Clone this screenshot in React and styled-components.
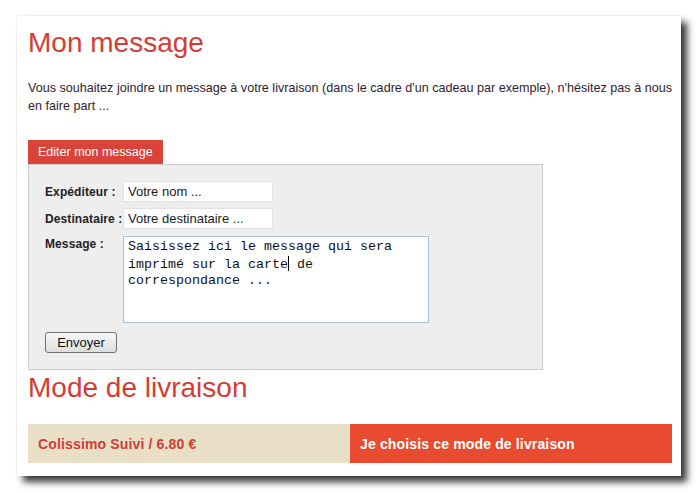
import React from "react";
import styled, { createGlobalStyle } from "styled-components";

const Global = createGlobalStyle`
  html, body { margin: 0; padding: 0; background: #ffffff; }
  body { font-family: "Liberation Sans", Arial, sans-serif; }
  * { box-sizing: border-box; }
`;

const Page = styled.div`
  padding: 16px 0 0 17px;
  width: 698px;
  height: 493px;
`;

const Card = styled.div`
  width: 664px;
  height: 460px;
  background: #ffffff;
  padding: 11px 9px 0 11px;
  box-shadow: 6px 6px 7px rgba(0, 0, 0, 0.78), 0 0 0 1px rgba(0, 0, 0, 0.035);
  display: flex;
  flex-direction: column;
`;

const Title = styled.h1`
  margin: ${(p) => p.$mt || 0}px 0 0 0;
  font-size: 28px;
  line-height: 32px;
  font-weight: normal;
  color: #d33d35;
`;

const Intro = styled.p`
  margin: 20px 0 0 0;
  font-size: 12.6px;
  line-height: 18px;
  color: #33222e;
`;

const Tab = styled.div`
  margin-top: 25px;
  align-self: flex-start;
  width: 135px;
  height: 24px;
  background: #d9433a;
  color: #ffffff;
  font-size: 12.5px;
  line-height: 24px;
  padding-left: 10px;
`;

const FormBox = styled.div`
  width: 515px;
  background: #eeeeee;
  border: 1px solid #cccccc;
  padding: 16px;
  display: flex;
  flex-direction: column;
  align-items: flex-start;
`;

const Grid = styled.div`
  display: grid;
  grid-template-columns: 78px auto;
  row-gap: 6px;
  align-items: center;
`;

const Label = styled.label`
  font-size: 12px;
  font-weight: bold;
  letter-spacing: 0.1px;
  color: #222;
  align-self: ${(p) => (p.$top ? "start" : "center")};
  padding-top: ${(p) => (p.$top ? "2px" : "0")};
`;

const TextInput = styled.div`
  width: 150px;
  height: 21px;
  background: #ffffff;
  border: 1px solid #e2e2e2;
  font-size: 13px;
  line-height: 19px;
  padding-left: 4px;
  color: #221a22;
`;

const MessageBox = styled.div`
  margin-top: 1px;
  width: 306px;
  height: 87px;
  background: #ffffff;
  border: 1px solid #a9bfd2;
  padding: 2px 4px;
  font-family: "Liberation Mono", "Courier New", monospace;
  font-size: 13.33px;
  line-height: 16.5px;
  color: #111;
`;

const MessageLine = styled.div`
  white-space: pre;
`;

const Caret = styled.span`
  display: inline-block;
  width: 1px;
  height: 15px;
  background: #000;
  vertical-align: -3px;
`;

const Button = styled.button`
  margin-top: 9px;
  width: 72px;
  height: 21px;
  border: 1px solid #707070;
  border-radius: 3px;
  background: linear-gradient(#f7f7f7, #dedede);
  font-family: "Liberation Sans", Arial, sans-serif;
  font-size: 13px;
  color: #111;
  padding: 0;
`;

const Delivery = styled.div`
  margin-top: 20px;
  display: grid;
  grid-template-columns: 1fr 1fr;
  height: 39px;
`;

const Cell = styled.div`
  background: ${(p) => (p.$action ? "#e84b2f" : "#e8dfc6")};
  color: ${(p) => (p.$action ? "#ffffff" : "#cc3f36")};
  font-size: 14px;
  font-weight: bold;
  letter-spacing: 0.15px;
  display: flex;
  align-items: center;
  padding-left: 10px;
`;

export default function App() {
  return (
    <Page>
      <Global />
      <Card>
        <Title>Mon message</Title>
        <Intro>
          Vous souhaitez joindre un message à votre livraison (dans le cadre d'un cadeau par exemple), n'hésitez pas à nous en faire part ...
        </Intro>
        <Tab>Editer mon message</Tab>
        <FormBox>
          <Grid>
            <Label>Expéditeur :</Label>
            <TextInput>Votre nom ...</TextInput>
            <Label>Destinataire :</Label>
            <TextInput>Votre destinataire ...</TextInput>
            <Label $top>Message :</Label>
            <MessageBox>
              <MessageLine>Saisissez ici le message qui sera</MessageLine>
              <MessageLine>
                imprimé sur la carte<Caret /> de
              </MessageLine>
              <MessageLine>correspondance ...</MessageLine>
            </MessageBox>
          </Grid>
          <Button>Envoyer</Button>
        </FormBox>
        <Title $mt={2}>Mode de livraison</Title>
        <Delivery>
          <Cell>Colissimo Suivi / 6.80 €</Cell>
          <Cell $action>Je choisis ce mode de livraison</Cell>
        </Delivery>
      </Card>
    </Page>
  );
}
